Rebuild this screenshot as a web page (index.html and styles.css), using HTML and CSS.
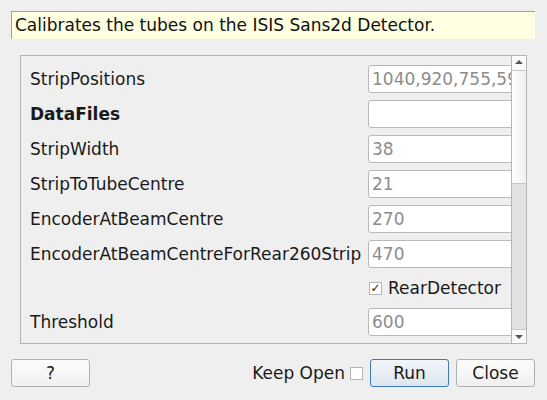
FILE: index.html
```html
<!DOCTYPE html>
<html>
<head>
<meta charset="utf-8">
<link rel="stylesheet" href="styles.css">
</head>
<body>
<div class="dialog">
  <div class="banner">Calibrates the tubes on the ISIS Sans2d Detector.</div>
  <div class="scroll">
    <div class="content">
      <div class="row"><span class="label">StripPositions</span><div class="input">1040,920,755,590,425,260,95,5</div></div>
      <div class="row"><span class="label bold">DataFiles</span><div class="input"></div></div>
      <div class="row"><span class="label">StripWidth</span><div class="input">38</div></div>
      <div class="row"><span class="label">StripToTubeCentre</span><div class="input">21</div></div>
      <div class="row"><span class="label">EncoderAtBeamCentre</span><div class="input">270</div></div>
      <div class="row"><span class="label">EncoderAtBeamCentreForRear260Strip</span><div class="input">470</div></div>
      <div class="row short"><span class="label"></span><div class="check"><span class="box checked">&#10003;</span><span>RearDetector</span></div></div>
      <div class="row"><span class="label">Threshold</span><div class="input">600</div></div>
    </div>
    <div class="scrollbar">
      <div class="arrow up"></div>
      <div class="track"><div class="handle"></div></div>
      <div class="arrow down"></div>
    </div>
  </div>
  <div class="buttons">
    <button class="btn">?</button>
    <div class="spacer"></div>
    <span class="keep">Keep Open</span><span class="box small"></span>
    <button class="btn default">Run</button>
    <button class="btn">Close</button>
  </div>
</div>
</body>
</html>
```
FILE: styles.css
```css
html, body {
  margin: 0;
  padding: 0;
  background: #efefef;
  font-family: "DejaVu Sans", sans-serif;
  font-size: 17px;
  color: #1a1a1a;
}
.dialog {
  width: 547px;
  height: 400px;
  box-sizing: border-box;
  padding: 11px 12px 0 11px;
  display: flex;
  flex-direction: column;
}
.banner {
  height: 28px;
  box-sizing: border-box;
  background: #ffffe1;
  border-top: 1px solid #a0a0a0;
  border-left: 1px solid #a0a0a0;
  padding-left: 3px;
  line-height: 26px;
  white-space: nowrap;
  color: #111;
}
.scroll {
  margin: 16px 8px 0 9px;
  height: 289px;
  box-sizing: border-box;
  border: 1px solid #b5b5b5;
  display: flex;
}
.content {
  flex: 1;
  overflow: hidden;
  padding: 9px 0 0 9px;
  display: flex;
  flex-direction: column;
  gap: 7px;
}
.row {
  height: 28px;
  flex: none;
  display: flex;
  align-items: center;
}
.row.short { height: 26px; }
.label {
  width: 338px;
  flex: none;
  white-space: nowrap;
}
.bold { font-weight: bold; }
.input {
  flex: none;
  width: 150px;
  height: 28px;
  box-sizing: border-box;
  background: #fff;
  border: 1px solid #b9b9b9;
  border-radius: 3px;
  padding-left: 3px;
  line-height: 26px;
  color: #8c8c8c;
  white-space: nowrap;
  overflow: hidden;
}
.check {
  display: flex;
  align-items: center;
  gap: 6px;
  padding-left: 1px;
}
.box {
  width: 13px;
  height: 13px;
  box-sizing: border-box;
  background: #fff;
  border: 1px solid #b4b4b4;
  display: inline-flex;
  align-items: center;
  justify-content: center;
  font-size: 12px;
  line-height: 1;
  color: #222;
}
.scrollbar {
  width: 14px;
  flex: none;
  border-left: 1px solid #b5b5b5;
  display: flex;
  flex-direction: column;
  background: #e2e2e2;
}
.arrow {
  height: 14px;
  flex: none;
  background: #f9f9f9;
  position: relative;
}
.arrow.up { border-bottom: 1px solid #c8c8c8; }
.arrow.down { border-top: 1px solid #c8c8c8; height: 13px; }
.arrow::after {
  content: "";
  position: absolute;
  left: 3px;
  width: 0;
  height: 0;
  border-left: 4px solid transparent;
  border-right: 4px solid transparent;
}
.arrow.up::after { top: 4px; border-bottom: 4px solid #555; }
.arrow.down::after { top: 5px; border-top: 4px solid #555; }
.track {
  flex: 1;
  display: flex;
  flex-direction: column;
}
.handle {
  height: 112px;
  background: linear-gradient(to right, #ffffff, #f0f0f0);
  border-bottom: 1px solid #c8c8c8;
}
.buttons {
  margin-top: 15px;
  display: flex;
  align-items: center;
  height: 28px;
}
.spacer { flex: 1; }
.btn {
  height: 28px;
  width: 79px;
  box-sizing: border-box;
  border: 1px solid #b1b1b1;
  border-radius: 3px;
  background: linear-gradient(to bottom, #fcfcfc, #f0f0f0);
  font-family: "DejaVu Sans", sans-serif;
  font-size: 17px;
  color: #1a1a1a;
  padding: 0;
}
.btn.default {
  border-color: #3b7bbd;
  background: linear-gradient(to bottom, #f2f6fa, #dde6ef);
  margin-left: 7px;
  margin-right: 7px;
}
.keep { margin-right: 5px; }
.box.small { width: 13px; height: 13px; }
```
